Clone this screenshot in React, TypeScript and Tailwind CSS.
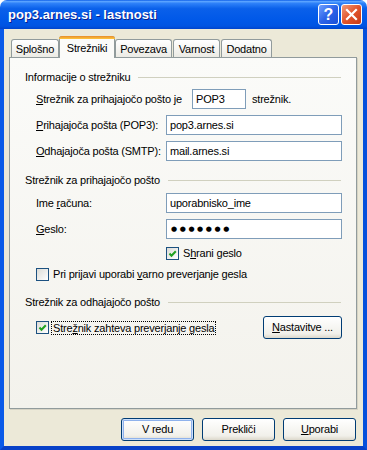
import React from 'react';

const font = { fontFamily: '"Liberation Sans", Arial, sans-serif' };

const Checkbox = ({ checked }: { checked?: boolean }) => (
  <span className="w-[13px] h-[13px] shrink-0 border border-[#1c5180] bg-[linear-gradient(135deg,#dcdcd7,#ffffff)] flex items-center justify-center">
    {checked && (
      <svg width="11" height="11" viewBox="0 0 11 11">
        <polyline points="2.5,5.5 4.5,7.8 8.8,3.2" fill="none" stroke="#21a121" strokeWidth="2" />
      </svg>
    )}
  </span>
);

const Input = ({ value, className = '' }: { value: string; className?: string }) => (
  <div className={`h-[20px] border border-[#7f9db9] bg-white flex items-center pl-[3px] ${className}`}>
    {value}
  </div>
);

const GroupHead = ({ title }: { title: string }) => (
  <div className="flex items-center h-[14px]">
    <span>{title}</span>
    <div className="flex-1 h-px bg-[#d0d0bf] ml-[8px] mr-px" />
  </div>
);

const Button = ({ children, def, className = '' }: { children: React.ReactNode; def?: boolean; className?: string }) => (
  <div
    className={`h-[23px] border border-[#003c74] rounded-[3px] bg-[linear-gradient(#ffffff,#f1f0ea_80%,#dcd8cb)] flex items-center justify-center ${
      def ? 'shadow-[inset_0_0_0_1px_#cde0fb,inset_0_0_0_2px_#8fb2ec]' : ''
    } ${className}`}
  >
    {children}
  </div>
);

const Tab = ({ label, w, active }: { label: string; w: string; active?: boolean }) =>
  active ? (
    <div className={`${w} h-[22px] -mb-px relative border border-b-0 border-[#919b9c] rounded-t-[3px] bg-[#fbfbf9] flex items-center justify-center pt-[1px]`}>
      <div className="absolute -top-px -left-px -right-px h-[3px] rounded-t-[3px] bg-[linear-gradient(#e68b2c,#ffc73c)]" />
      {label}
    </div>
  ) : (
    <div className={`${w} h-[18px] border border-b-0 border-[#919b9c] rounded-t-[3px] bg-[linear-gradient(#ffffff,#ecebe5)] flex items-center justify-center pt-[1px]`}>
      {label}
    </div>
  );

export default function App() {
  return (
    <div className="w-[367px] h-[450px] flex flex-col text-[11px] tracking-[-0.2px] text-black bg-white" style={font}>
      {/* title bar */}
      <div className="h-[29px] rounded-t-[7px] bg-[linear-gradient(180deg,#0b5ce8_0%,#5aa3ff_5%,#2d80f8_12%,#0a60ea_30%,#0058e8_70%,#0054e2_90%,#0044cc_100%)] flex items-center pl-[8px] pr-[5px]">
        <span className="text-white font-bold text-[13px] tracking-normal [text-shadow:1px_1px_#0a1e8c]">pop3.arnes.si - lastnosti</span>
        <div className="ml-auto flex gap-[2px]">
          <div className="w-[21px] h-[21px] rounded-[3px] border border-white bg-[linear-gradient(135deg,#6fa0ff,#2c63e8_50%,#1a4fd8)] flex items-center justify-center text-white font-bold text-[16px] tracking-normal leading-none">
            ?
          </div>
          <div className="w-[21px] h-[21px] rounded-[3px] border border-white bg-[linear-gradient(135deg,#f19b7a,#e2542b_50%,#c63a18)] flex items-center justify-center">
            <svg width="13" height="13" viewBox="0 0 13 13">
              <path d="M2 2 L11 11 M11 2 L2 11" stroke="white" strokeWidth="2.2" strokeLinecap="square" />
            </svg>
          </div>
        </div>
      </div>

      {/* body */}
      <div className="flex-1 bg-[#ece9d8] border-x-4 border-b-4 border-l-[#0a5ae8] border-r-[#0650dc] border-b-[#0841c8] pt-[7px] flex flex-col">
        <div className="flex items-end h-[21px] pl-[7px] relative z-10">
          <Tab label="Splošno" w="w-[48px]" />
          <Tab label="Strežniki" w="w-[56px]" active />
          <Tab label="Povezava" w="w-[57px]" />
          <div className="w-px" />
          <Tab label="Varnost" w="w-[47px]" />
          <div className="w-px" />
          <Tab label="Dodatno" w="w-[51px]" />
        </div>

        <div className="ml-[5px] w-[348px] h-[352px] border border-[#919b9c] bg-[linear-gradient(#fbfbf9,#f3f2ec)] shadow-[1px_1px_0_#d6d3c4] pt-[12px] pl-[15px] pr-[14px] flex flex-col">
          <GroupHead title="Informacije o strežniku" />
          <div className="mt-[5px] flex items-center pl-[11px]">
            <span className="w-[156px]"><u>S</u>trežnik za prihajajočo pošto je</span>
            <Input value="POP3" className="w-[54px]" />
            <span className="ml-[6px]">strežnik.</span>
          </div>
          <div className="mt-[6px] flex items-center pl-[11px]">
            <span className="w-[130px]"><u>P</u>rihajajoča pošta (POP3):</span>
            <Input value="pop3.arnes.si" className="flex-1" />
          </div>
          <div className="mt-[6px] flex items-center pl-[11px]">
            <span className="w-[130px]"><u>O</u>dhajajoča pošta (SMTP):</span>
            <Input value="mail.arnes.si" className="flex-1" />
          </div>

          <div className="mt-[12px]">
            <GroupHead title="Strežnik za prihajajočo pošto" />
          </div>
          <div className="mt-[6px] flex items-center pl-[11px]">
            <span className="w-[130px]">Ime <u>r</u>ačuna:</span>
            <Input value="uporabnisko_ime" className="flex-1" />
          </div>
          <div className="mt-[6px] flex items-center pl-[11px]">
            <span className="w-[130px]"><u>G</u>eslo:</span>
            <div className="flex-1 h-[20px] border border-[#7f9db9] bg-white flex items-center pl-[4px] text-[7px] tracking-[2.6px]" style={{ fontFamily: '"DejaVu Sans", sans-serif' }}>
              ●●●●●●●
            </div>
          </div>
          <div className="mt-[8px] flex items-center pl-[141px] h-[13px]">
            <Checkbox checked />
            <span className="ml-[4px]">S<u>h</u>rani geslo</span>
          </div>
          <div className="mt-[8px] flex items-center pl-[11px] h-[13px]">
            <Checkbox />
            <span className="ml-[4px]">Pri prijavi uporabi <u>v</u>arno preverjanje gesla</span>
          </div>

          <div className="mt-[14px]">
            <GroupHead title="Strežnik za odhajajočo pošto" />
          </div>
          <div className="mt-[7px] flex items-center pl-[11px]">
            <Checkbox checked />
            <span className="ml-[2px] border border-dotted border-black px-px leading-[12px]">
              Stre<u>ž</u>nik zahteva preverjanje gesla
            </span>
            <Button className="ml-auto w-[79px]">
              <span><u>N</u>astavitve ...</span>
            </Button>
          </div>
        </div>

        <div className="mt-[9px] flex justify-end gap-[8px] pr-[7px]">
          <Button def className="w-[73px]">V redu</Button>
          <Button className="w-[73px]">Prekliči</Button>
          <Button className="w-[73px]"><span><u>U</u>porabi</span></Button>
        </div>
      </div>
    </div>
  );
}
